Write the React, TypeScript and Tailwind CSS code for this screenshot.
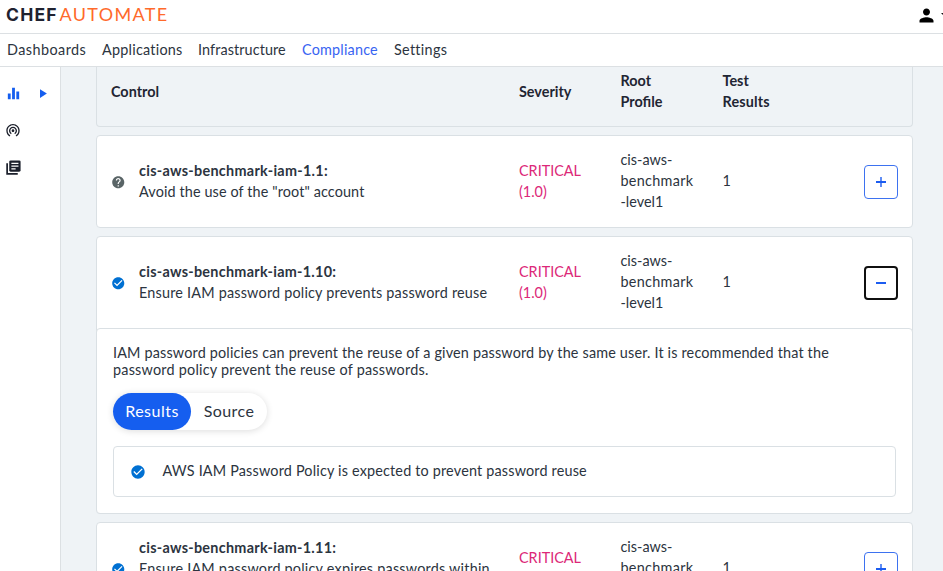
import type { ReactNode } from "react";
import {
  MdCheckCircle,
  MdEqualizer,
  MdHelp,
  MdPerson,
  MdPlayArrow,
  MdWifiTethering,
} from "react-icons/md";

type Control = {
  id: string;
  idClass: string;
  title: string;
  titleClass: string;
  passed: boolean;
  open: boolean;
};

const controls: Control[] = [
  { id: "cis-aws-benchmark-iam-1.1:", idClass: "tracking-[0.29px]", title: 'Avoid the use of the "root" account', titleClass: "tracking-[0.12px]", passed: false, open: false },
  { id: "cis-aws-benchmark-iam-1.10:", idClass: "tracking-[0.28px]", title: "Ensure IAM password policy prevents password reuse", titleClass: "tracking-[0.2px]", passed: true, open: true },
  { id: "cis-aws-benchmark-iam-1.11:", idClass: "tracking-[0.28px]", title: "Ensure IAM password policy expires passwords within", titleClass: "tracking-[0.22px] pb-[21px]", passed: true, open: false },
];

const navItems = [
  { label: "Dashboards", box: "w-[95px] tracking-[0.45px]" },
  { label: "Applications", box: "w-[96px] tracking-[0.24px]" },
  { label: "Infrastructure", box: "w-[104px] tracking-[0.1px]" },
  { label: "Compliance", box: "w-[92px] tracking-[0.2px] text-[#3864f2]" },
  { label: "Settings", box: "w-[60px] tracking-[0.3px]" },
];

function Row({ children, className = "" }: { children: ReactNode; className?: string }) {
  return (
    <div className={`grid grid-cols-[408px_101.5px_102px_141.5px_34px] items-center pl-[14px] leading-[21px] ${className}`}>
      {children}
    </div>
  );
}

function Sign({ minus }: { minus: boolean }) {
  return (
    <svg width="10" height="10" viewBox="0 0 10 10" stroke="#1c5cf0" fill="none">
      <path d="M0 5H10" strokeWidth="2" />
      {!minus && <path d="M5 0V10" strokeWidth="1.4" />}
    </svg>
  );
}

function ReportsIcon() {
  return (
    <svg width="17" height="17" viewBox="0 0 24 24" className="mt-px" fill="none" stroke="currentColor">
      <path d="M3 6V21H18" strokeWidth="2.4" />
      <rect x="6" y="2" width="16" height="16" rx="2" fill="currentColor" stroke="none" />
      <path d="M9 6.1H19M9 10H19M9 13.9H15" stroke="#fff" strokeWidth="1.7" />
    </svg>
  );
}

function Details() {
  return (
    <div className="-mx-px -mb-px rounded-[4px] border border-[#dae0e4] bg-white px-4 pt-[15px] pb-4">
      <p className="leading-[17px] whitespace-nowrap">
        <span className="tracking-[0.17px]">
          IAM password policies can prevent the reuse of a given password by the same user. It is recommended that the
        </span>
        <br />
        <span className="tracking-[0.22px]">password policy prevent the reuse of passwords.</span>
      </p>
      <div className="mt-[15px] flex h-[37px] w-[154px] rounded-full text-[16px] shadow-[0_1px_7px_rgba(0,0,0,0.14)]">
        <button className="w-[78px] rounded-full bg-[#155eef] pb-[2px] tracking-[0.5px] text-white">Results</button>
        <button className="w-[76px] pb-[2px] tracking-[0.4px]">Source</button>
      </div>
      <div className="mt-4 flex h-[51px] items-center rounded-[4px] border border-[#dae0e4] pl-[16px]">
        <MdCheckCircle size={16} color="#0070d2" />
        <span className="ml-[16.5px] pb-[2px] tracking-[0.18px]">
          AWS IAM Password Policy is expected to prevent password reuse
        </span>
      </div>
    </div>
  );
}

function ControlCard({ control }: { control: Control }) {
  return (
    <section className="mb-2 rounded-[4px] border border-[#dae0e4] bg-white">
      <Row className="h-[91px]">
        <div className="flex items-center">
          <span className="flex shrink-0 pt-px">
            {control.passed ? <MdCheckCircle size={14.5} color="#0070d2" /> : <MdHelp size={14.5} color="#596466" />}
          </span>
          <div className="ml-[13.5px] pb-px whitespace-nowrap">
            <div className={`font-bold ${control.idClass}`}>{control.id}</div>
            <div className={control.titleClass}>{control.title}</div>
          </div>
        </div>
        <div className="pb-[2px] text-[#dc2878]">
          CRITICAL
          <br />
          (1.0)
        </div>
        <div className="pb-[2px]">
          cis-aws-
          <br />
          <span className="tracking-[0.3px]">benchmark</span>
          <br />
          -level1
        </div>
        <div className="pb-[2px]">1</div>
        <button
          className={`flex h-[34px] w-[34px] items-center justify-center rounded-[4px] ${
            control.open ? "border-2 border-[#101010]" : "border border-[#3d72f0]"
          }`}
        >
          <Sign minus={control.open} />
        </button>
      </Row>
      {control.open && <Details />}
    </section>
  );
}

export default function App() {
  return (
    <div className="flex h-[571px] w-[943px] flex-col overflow-hidden bg-white font-[Lato,sans-serif] text-[14.4px] text-[#2c3440]">
      <header className="flex h-[34px] shrink-0 items-center justify-between border-b border-[#dce0e3] pl-[6px]">
        <div className="flex items-baseline pb-[4px] leading-none">
          <span className="w-[53.5px] font-[Inter,sans-serif] text-[17.5px] font-bold tracking-[1.2px] text-[#1f2230]">CHEF</span>
          <span className="text-[18px] tracking-[1.35px] text-[#ff6a2b]">AUTOMATE</span>
        </div>
        <div className="flex w-[27px] items-center overflow-hidden pb-[3px]">
          <MdPerson size={21} color="#000" className="shrink-0" />
          <svg width="8" height="4" viewBox="0 0 8 4" className="ml-[4px] shrink-0">
            <path d="M0 0H8L4 4Z" fill="#111" />
          </svg>
        </div>
      </header>
      <nav className="flex h-[33px] shrink-0 items-center border-b border-[#dce0e3] pl-[7px]">
        {navItems.map((item) => (
          <a key={item.label} className={`shrink-0 whitespace-nowrap ${item.box}`}>
            {item.label}
          </a>
        ))}
      </nav>
      <div className="flex min-h-0 flex-1">
        <aside className="flex w-[61px] shrink-0 flex-col gap-[20px] border-r border-[#dce0e3] pt-[18px] pl-[5px] text-[#1b1f2b]">
          <div className="flex items-center text-[#155eef]">
            <MdEqualizer size={17} />
            <MdPlayArrow size={15} className="ml-[13px]" />
          </div>
          <MdWifiTethering size={16} />
          <ReportsIcon />
        </aside>
        <main className="min-w-0 flex-1 overflow-hidden bg-[#eff3f6] pr-[30px] pl-[35px]">
          <section className="mb-2 rounded-b-[4px] border border-t-0 border-[#dae0e4] pt-[3px] pb-[14px] font-bold text-[#1f2533]">
            <Row>
              <div>Control</div>
              <div>Severity</div>
              <div>
                Root
                <br />
                Profile
              </div>
              <div>
                Test
                <br />
                <span className="tracking-[0.15px]">Results</span>
              </div>
            </Row>
          </section>
          {controls.map((control) => (
            <ControlCard key={control.id} control={control} />
          ))}
        </main>
      </div>
    </div>
  );
}
